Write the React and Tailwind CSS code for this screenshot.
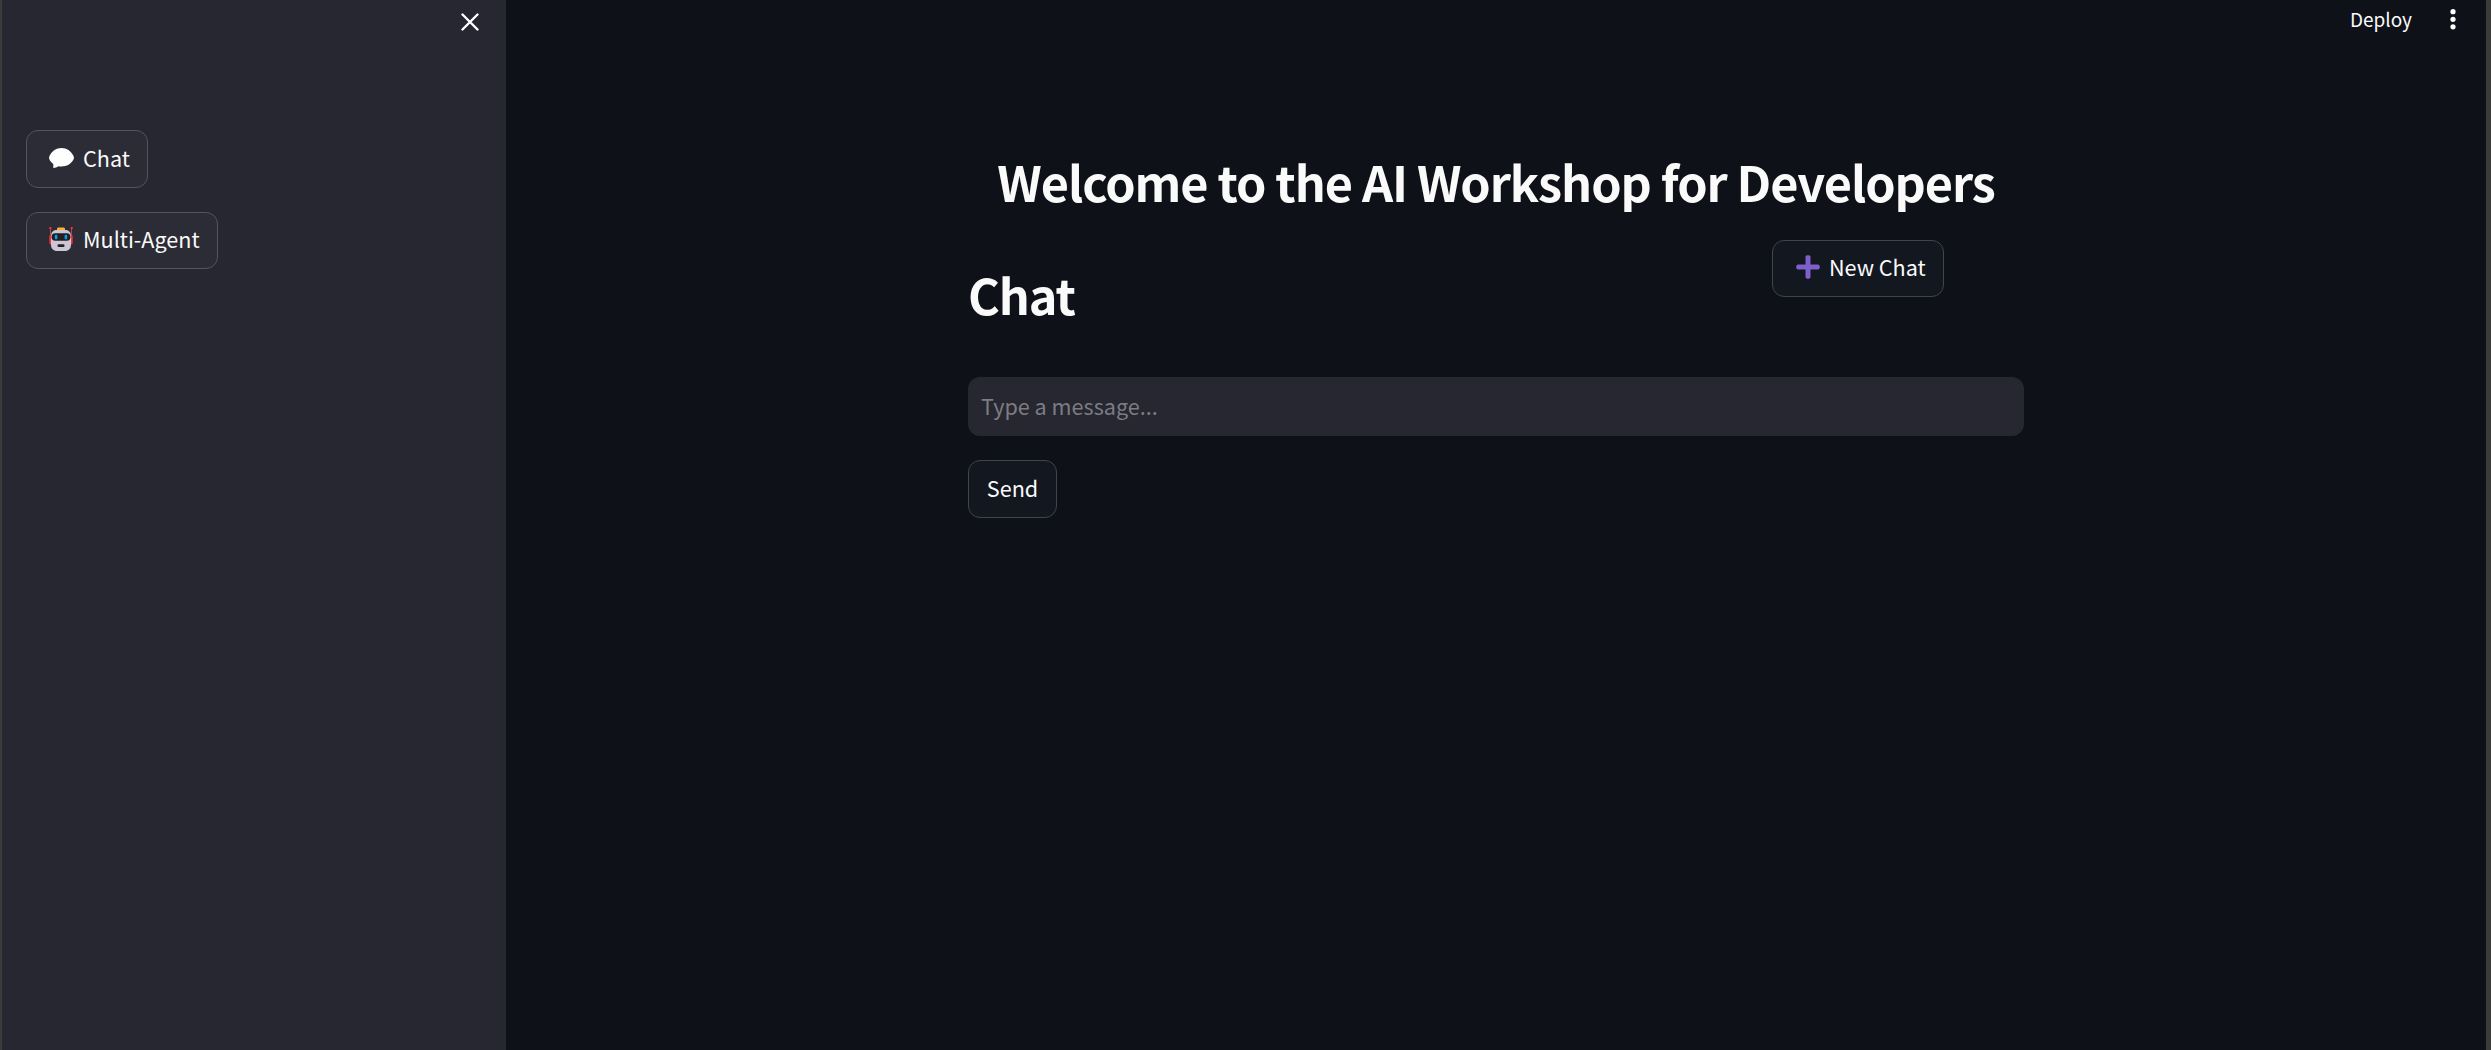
function SpeechIcon() {
  return (
    <svg className="h-[20px] w-[25px] shrink-0" viewBox="0 0 25 20" fill="#fff">
      <path d="M12.5 0C7 0 3.200 3 .6 7.800c-.7 1.300-.7 2.700 0 4 .9 1.700 2 3 3.700 4.100V20c2-.3 3.600-.8 5-1.800 1 .2 2 .3 3.200.3 5.500 0 9.300-2.600 11.900-6.700.7-1.200.7-2.700 0-4C21.800 3 18 0 12.500 0z" />
    </svg>
  );
}

function RobotIcon() {
  return (
    <svg className="h-[24px] w-[24px] shrink-0" viewBox="0 0 24 24">
      <rect x="1" y="1" width="1" height="9" fill="#b4434b" />
      <rect x="22" y="1" width="1" height="9" fill="#b4434b" />
      <rect x="0.200" y="0" width="2.200" height="2.200" rx="0.700" fill="#f8312f" />
      <rect x="21.600" y="0" width="2.200" height="2.200" rx="0.700" fill="#f8312f" />
      <rect x="0.300" y="8" width="3" height="9.500" rx="1.400" fill="#f8312f" />
      <rect x="20.700" y="8" width="3" height="9.500" rx="1.400" fill="#f8312f" />
      <path d="M8 3.500V1.800C8 1 8.700.4 9.500.4h5c.8 0 1.500.6 1.500 1.400v1.700z" fill="#ffb02e" />
      <path d="M7.500 3h9c3.500 0 5.500 2.600 5.500 6v9c0 3.500-2.500 6-6 6H8c-3.500 0-6-2.500-6-6V9c0-3.400 2-6 5.500-6z" fill="#cdc4d6" />
      <rect x="2.500" y="6.300" width="19" height="7.500" rx="3.700" fill="#212121" />
      <rect x="5.800" y="7.800" width="2.600" height="4.600" rx="1.300" fill="#00a6ed" />
      <rect x="15.600" y="7.800" width="2.600" height="4.600" rx="1.300" fill="#00a6ed" />
      <rect x="8.500" y="17.300" width="7" height="2.600" rx="1.200" fill="#212121" />
    </svg>
  );
}

function PlusIcon() {
  return (
    <svg className="h-[24px] w-[24px] shrink-0" viewBox="0 0 24 24" fill="#7f5fca">
      <rect x="9.500" y="0.300" width="5" height="23.400" rx="1.700" />
      <rect x="0.300" y="9.500" width="23.400" height="5" rx="1.700" />
    </svg>
  );
}

function Button({ className, children }) {
  return (
    <button className={`flex items-center rounded-[12px] border pb-[3px] text-[21.600px] leading-[36px] text-[#fafafa] ${className}`}>
      {children}
    </button>
  );
}

export default function App() {
  return (
    <div className="flex h-[1050px] w-[2491px] overflow-hidden border-l-2 border-l-[#3b3b39] bg-[#0e1117] font-['Noto_Sans_CJK_SC',sans-serif] text-[#fafafa]">
      <aside className="flex w-[504px] shrink-0 flex-col items-start bg-[#262730] px-[24px]">
        <div className="flex h-[130px] w-full justify-end pt-[13px] pr-[3px]">
          <svg className="h-[18px] w-[18px]" viewBox="0 0 18 18" fill="none" stroke="#fff" strokeWidth="2.400" strokeLinecap="round">
            <path d="M1.500 1.500l15 15M16.500 1.500l-15 15" />
          </svg>
        </div>
        <Button className="h-[58px] w-[122px] border-[#53545c] bg-[#2b2c36] pl-[22px]">
          <SpeechIcon />
          <span className="ml-[9px]">Chat</span>
        </Button>
        <Button className="mt-[24px] h-[57px] w-[192px] border-[#53545c] bg-[#2b2c36] pl-[22px]">
          <RobotIcon />
          <span className="ml-[10px] whitespace-nowrap">Multi-Agent</span>
        </Button>
      </aside>
      <main className="flex min-w-0 grow flex-col items-center">
        <header className="flex h-[130px] w-full items-start justify-end pt-[9px] pr-[30px]">
          <span className="text-[19px] leading-[19px]">Deploy</span>
          <svg className="ml-[38px] h-[21px] w-[6px]" viewBox="0 0 6 21" fill="#fff">
            <circle cx="3" cy="2.700" r="2.600" />
            <circle cx="3" cy="10.300" r="2.600" />
            <circle cx="3" cy="17.800" r="2.600" />
          </svg>
        </header>
        <section className="flex w-[1056px] flex-col items-start">
          <h1 className="h-[110px] w-full text-center text-[48.600px] leading-[102px] font-bold tracking-[-1.060px] whitespace-nowrap">
            Welcome to the AI Workshop for Developers
          </h1>
          <div className="flex h-[137px] w-full justify-between pr-[80px]">
            <h2 className="text-[48.600px] leading-[108px] font-bold tracking-[-1.060px]">Chat</h2>
            <Button className="h-[57px] w-[172px] border-[#41444c] bg-[#131720] pl-[23px]">
              <PlusIcon />
              <span className="ml-[9px] whitespace-nowrap">New Chat</span>
            </Button>
          </div>
          <input
            className="h-[59px] w-full rounded-[12px] bg-[#262730] px-[13px] pb-[2px] text-[21.600px] placeholder:text-[#7c7c82]"
            placeholder="Type a message..."
          />
          <Button className="mt-[24px] h-[58px] w-[89px] justify-center border-[#41444c] bg-[#131720]">
            Send
          </Button>
        </section>
      </main>
      <div className="w-[5px] shrink-0 bg-[#3b3b39]" />
    </div>
  );
}
